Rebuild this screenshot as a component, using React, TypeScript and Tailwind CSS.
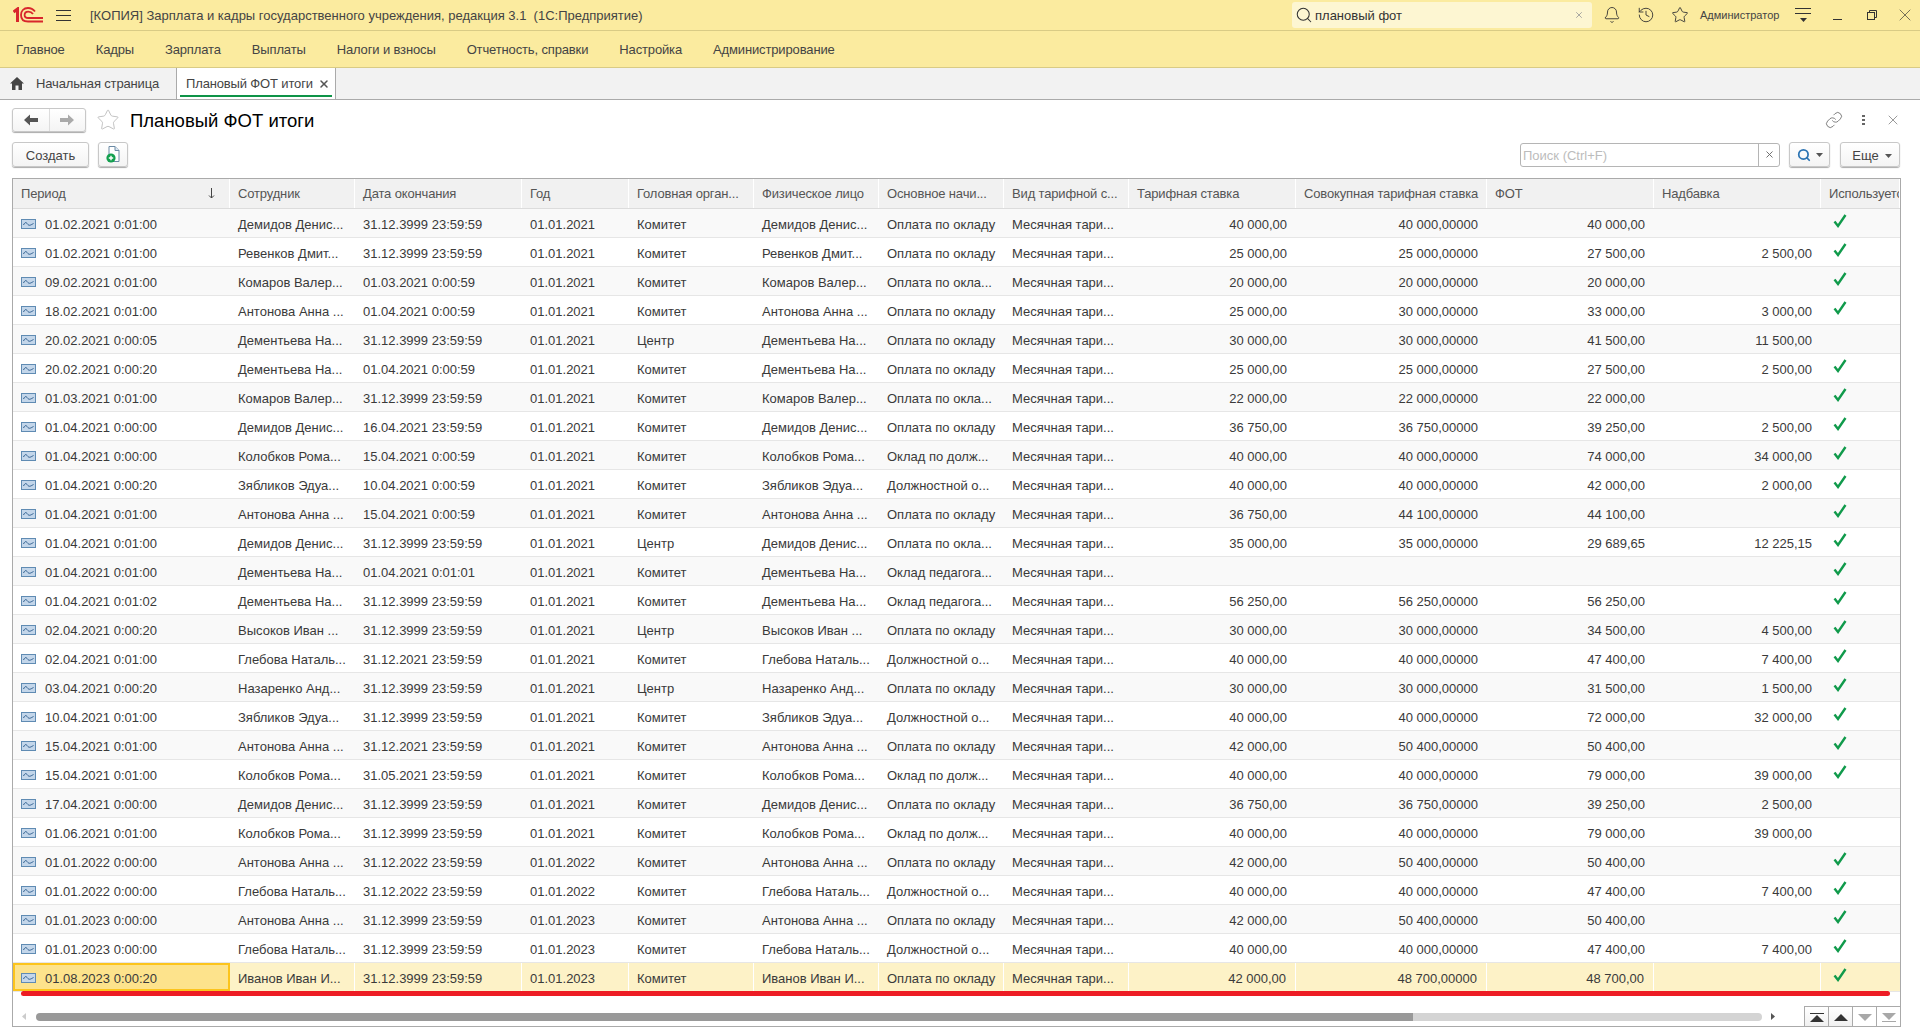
import React from "react";
import { Bell, History, Link, Search, Star, X } from "lucide-react";

const MENU = ["Главное", "Кадры", "Зарплата", "Выплаты", "Налоги и взносы", "Отчетность, справки", "Настройка", "Администрирование"];

// column widths follow the reference grid
const GRID = "grid grid-cols-[217px_125px_167px_107px_125px_125px_125px_125px_167px_191px_167px_167px_79px]";

const HEADERS = [
  "Период",
  "Сотрудник",
  "Дата окончания",
  "Год",
  "Головная орган...",
  "Физическое лицо",
  "Основное начи...",
  "Вид тарифной с...",
  "Тарифная ставка",
  "Совокупная тарифная ставка",
  "ФОТ",
  "Надбавка",
  "Используется",
];

const PAY = "Оплата по окладу";
const PAY2 = "Оплата по окла...";
const POST = "Оклад по долж...";
const DUTY = "Должностной о...";
const TEACH = "Оклад педагога...";
const END = "31.12.3999 23:59:59";

type Row = [string, string, string, string, string, string, string, string, string, string, boolean];

const ROWS: Row[] = [
  ["01.02.2021 0:01:00", "Демидов Денис...", END, "Комитет", PAY, "40 000,00", "40 000,00000", "40 000,00", "", "01.01.2021", true],
  ["01.02.2021 0:01:00", "Ревенков Дмит...", END, "Комитет", PAY, "25 000,00", "25 000,00000", "27 500,00", "2 500,00", "01.01.2021", true],
  ["09.02.2021 0:01:00", "Комаров Валер...", "01.03.2021 0:00:59", "Комитет", PAY2, "20 000,00", "20 000,00000", "20 000,00", "", "01.01.2021", true],
  ["18.02.2021 0:01:00", "Антонова Анна ...", "01.04.2021 0:00:59", "Комитет", PAY, "25 000,00", "30 000,00000", "33 000,00", "3 000,00", "01.01.2021", true],
  ["20.02.2021 0:00:05", "Дементьева На...", END, "Центр", PAY, "30 000,00", "30 000,00000", "41 500,00", "11 500,00", "01.01.2021", false],
  ["20.02.2021 0:00:20", "Дементьева На...", "01.04.2021 0:00:59", "Комитет", PAY, "25 000,00", "25 000,00000", "27 500,00", "2 500,00", "01.01.2021", true],
  ["01.03.2021 0:01:00", "Комаров Валер...", END, "Комитет", PAY2, "22 000,00", "22 000,00000", "22 000,00", "", "01.01.2021", true],
  ["01.04.2021 0:00:00", "Демидов Денис...", "16.04.2021 23:59:59", "Комитет", PAY, "36 750,00", "36 750,00000", "39 250,00", "2 500,00", "01.01.2021", true],
  ["01.04.2021 0:00:00", "Колобков Рома...", "15.04.2021 0:00:59", "Комитет", POST, "40 000,00", "40 000,00000", "74 000,00", "34 000,00", "01.01.2021", true],
  ["01.04.2021 0:00:20", "Зябликов Эдуа...", "10.04.2021 0:00:59", "Комитет", DUTY, "40 000,00", "40 000,00000", "42 000,00", "2 000,00", "01.01.2021", true],
  ["01.04.2021 0:01:00", "Антонова Анна ...", "15.04.2021 0:00:59", "Комитет", PAY, "36 750,00", "44 100,00000", "44 100,00", "", "01.01.2021", true],
  ["01.04.2021 0:01:00", "Демидов Денис...", END, "Центр", PAY2, "35 000,00", "35 000,00000", "29 689,65", "12 225,15", "01.01.2021", true],
  ["01.04.2021 0:01:00", "Дементьева На...", "01.04.2021 0:01:01", "Комитет", TEACH, "", "", "", "", "01.01.2021", true],
  ["01.04.2021 0:01:02", "Дементьева На...", END, "Комитет", TEACH, "56 250,00", "56 250,00000", "56 250,00", "", "01.01.2021", true],
  ["02.04.2021 0:00:20", "Высоков Иван ...", END, "Центр", PAY, "30 000,00", "30 000,00000", "34 500,00", "4 500,00", "01.01.2021", true],
  ["02.04.2021 0:01:00", "Глебова Наталь...", "31.12.2021 23:59:59", "Комитет", DUTY, "40 000,00", "40 000,00000", "47 400,00", "7 400,00", "01.01.2021", true],
  ["03.04.2021 0:00:20", "Назаренко Анд...", END, "Центр", PAY, "30 000,00", "30 000,00000", "31 500,00", "1 500,00", "01.01.2021", true],
  ["10.04.2021 0:01:00", "Зябликов Эдуа...", END, "Комитет", DUTY, "40 000,00", "40 000,00000", "72 000,00", "32 000,00", "01.01.2021", true],
  ["15.04.2021 0:01:00", "Антонова Анна ...", "31.12.2021 23:59:59", "Комитет", PAY, "42 000,00", "50 400,00000", "50 400,00", "", "01.01.2021", true],
  ["15.04.2021 0:01:00", "Колобков Рома...", "31.05.2021 23:59:59", "Комитет", POST, "40 000,00", "40 000,00000", "79 000,00", "39 000,00", "01.01.2021", true],
  ["17.04.2021 0:00:00", "Демидов Денис...", END, "Комитет", PAY, "36 750,00", "36 750,00000", "39 250,00", "2 500,00", "01.01.2021", false],
  ["01.06.2021 0:01:00", "Колобков Рома...", END, "Комитет", POST, "40 000,00", "40 000,00000", "79 000,00", "39 000,00", "01.01.2021", false],
  ["01.01.2022 0:00:00", "Антонова Анна ...", "31.12.2022 23:59:59", "Комитет", PAY, "42 000,00", "50 400,00000", "50 400,00", "", "01.01.2022", true],
  ["01.01.2022 0:00:00", "Глебова Наталь...", "31.12.2022 23:59:59", "Комитет", DUTY, "40 000,00", "40 000,00000", "47 400,00", "7 400,00", "01.01.2022", true],
  ["01.01.2023 0:00:00", "Антонова Анна ...", END, "Комитет", PAY, "42 000,00", "50 400,00000", "50 400,00", "", "01.01.2023", true],
  ["01.01.2023 0:00:00", "Глебова Наталь...", END, "Комитет", DUTY, "40 000,00", "40 000,00000", "47 400,00", "7 400,00", "01.01.2023", true],
  ["01.08.2023 0:00:20", "Иванов Иван И...", END, "Комитет", PAY, "42 000,00", "48 700,00000", "48 700,00", "", "01.01.2023", true],
];

function Logo() {
  return (
    <svg width="30" height="16" viewBox="0 0 30 16" fill="none" stroke="#d8262c" className="shrink-0">
      <path d="M0.5 5 L4.5 2 V15" strokeWidth="3" />
      <path d="M22 4.5 C20 2 17.5 1 15 1 C10.5 1 8 4 8 8 C8 12 10.5 14.5 15 14.5 H30" strokeWidth="1.8" />
      <path d="M20 7 C19 5.5 17 4.6 15.2 4.6 C13 4.6 11.6 6 11.6 8 C11.6 10 13 11 15.2 11 H30" strokeWidth="1.8" />
    </svg>
  );
}

function RowIcon() {
  return (
    <svg width="15" height="10" viewBox="0 0 15 10" className="mt-[1px] shrink-0">
      <rect x="0.5" y="0.5" width="14" height="9" fill="#c3d6ea" stroke="#5f8bb3" />
      <path d="M2.5 6 C4 3 5 3 6.5 5 C8 7 9 6.5 12.5 4.5" fill="none" stroke="#2f5f8f" />
    </svg>
  );
}

function Check() {
  return (
    <svg width="14" height="14" viewBox="0 0 14 14" className="-mt-[5px] shrink-0">
      <path d="M1.5 7.5 L5 12 L12.5 1" fill="none" stroke="#109a4b" strokeWidth="2.4" />
    </svg>
  );
}

function Caret({ color = "#555" }: { color?: string }) {
  return (
    <svg width="7" height="4" viewBox="0 0 7 4" className="shrink-0">
      <path d="M0 0 H7 L3.5 4 Z" fill={color} />
    </svg>
  );
}

function NavArrow({ color, flip }: { color: string; flip?: boolean }) {
  return (
    <svg width="14" height="12" viewBox="0 0 14 12" className={flip ? "rotate-180" : ""}>
      <path d="M0 6 L6 0.5 V4 H14 V8 H6 V11.5 Z" fill={color} />
    </svg>
  );
}

function PagerButton({ up, edge, on }: { up: boolean; edge: boolean; on: boolean }) {
  const c = on ? "#333" : "#a8a8a8";
  return (
    <div className={`flex h-full w-6 flex-col items-center justify-center gap-[1px] border-l border-[#aaa] ${on ? "bg-gradient-to-b from-white to-[#f0f0f0]" : "bg-white"}`}>
      {edge && up && <div className="h-[1px] w-[14px]" style={{ background: c }} />}
      <svg width="14" height="7" viewBox="0 0 14 7" className={up ? "" : "rotate-180"}>
        <path d="M0 7 L7 0 L14 7 Z" fill={c} />
      </svg>
      {edge && !up && <div className="h-[1px] w-[14px]" style={{ background: c }} />}
    </div>
  );
}

function TableRow({ row, index }: { row: Row; index: number }) {
  const [period, person, end, org, pay, rate, total, fot, extra, year, used] = row;
  const selected = index === ROWS.length - 1;
  const bg = selected ? "bg-[#fdf2c7]" : index % 2 === 0 ? "bg-[#f9f9f9]" : "bg-white";
  const cell = `flex items-center overflow-hidden whitespace-nowrap px-2 pt-[3px] ${selected ? "border-r border-white" : ""}`;
  const num = `flex items-center justify-end overflow-hidden whitespace-nowrap pr-[9px] pt-[3px] ${selected ? "border-r border-white" : ""}`;
  return (
    <div className={`${GRID} h-[29px] border-b border-[#e6e6e6] text-[13px] text-[#3a3a3a] ${bg}`}>
      <div className={`flex items-center gap-[9px] pl-2 ${selected ? "border-2 border-[#fcc41c] bg-[#fde38c] pl-[6px]" : ""}`}>
        <RowIcon />
        <span className="pt-[3px]">{period}</span>
      </div>
      <div className={cell}>{person}</div>
      <div className={cell}>{end}</div>
      <div className={cell}>{year}</div>
      <div className={cell}>{org}</div>
      <div className={cell}>{person}</div>
      <div className={cell}>{pay}</div>
      <div className={cell}>Месячная тари...</div>
      <div className={num}>{rate}</div>
      <div className={num}>{total}</div>
      <div className={num}>{fot}</div>
      <div className={num}>{extra}</div>
      <div className="flex items-center pl-3">{used && <Check />}</div>
    </div>
  );
}

export default function App() {
  return (
    <div className="flex h-[1035px] w-[1920px] flex-col overflow-hidden bg-white font-['Liberation_Sans',Arial,sans-serif] text-[13px] text-[#333]">
      {/* Title bar */}
      <header className="flex h-[31px] items-center border-b border-[#d9cb85] bg-[#fbeb9f]">
        <div className="ml-[13px] w-[43px]">
          <Logo />
        </div>
        <div className="flex w-[15px] flex-col gap-[4px]">
          <div className="h-[1px] bg-[#333]" />
          <div className="h-[1px] bg-[#333]" />
          <div className="h-[1px] bg-[#333]" />
        </div>
        <div className="ml-[19px] w-[1202px] whitespace-nowrap pt-[1px] text-[#444]">
          [КОПИЯ] Зарплата и кадры государственного учреждения, редакция 3.1&nbsp; (1С:Предприятие)
        </div>
        <div className="flex h-[26px] w-[300px] items-center rounded-[3px] bg-[#fdf6d2] pl-[3px] pr-[8px]">
          <Search size={18} strokeWidth={1.4} className="shrink-0 text-[#333]" />
          <span className="ml-[2px] flex-1 pt-[1px]">плановый фот</span>
          <X size={10} className="text-[#999]" />
        </div>
        <Bell size={18} strokeWidth={1.2} className="ml-[11px] shrink-0 text-[#333]" />
        <History size={18} strokeWidth={1.2} className="ml-[16px] shrink-0 text-[#333]" />
        <Star size={18} strokeWidth={1.2} className="ml-[16px] shrink-0 text-[#333]" />
        <span className="ml-[11px] w-[91px] whitespace-nowrap text-[11px] text-[#444]">Администратор</span>
        <div className="ml-[4px] flex w-[16px] flex-col items-center gap-[4px]">
          <div className="h-[1px] w-full bg-[#333]" />
          <div className="h-[1px] w-full bg-[#333]" />
          <Caret color="#333" />
        </div>
        <div className="ml-[22px] mt-[8px] h-[1px] w-[9px] bg-[#333]" />
        <svg width="10" height="10" viewBox="0 0 10 10" className="ml-[25px] shrink-0" fill="none" stroke="#333">
          <rect x="0.5" y="2.5" width="7" height="7" />
          <path d="M2.5 2.5 V0.5 H9.5 V7.5 H7.5" />
        </svg>
        <X size={20} strokeWidth={0.8} className="ml-[18px] shrink-0 text-[#333]" />
      </header>

      {/* Section menu */}
      <nav className="flex h-[37px] items-center gap-[31px] border-b border-[#d9cb85] bg-[#fbeb9f] pl-4 pt-[2px] tracking-[-0.14px] text-[#444]">
        {MENU.map((item) => (
          <span key={item}>{item}</span>
        ))}
      </nav>

      {/* Open windows */}
      <div className="flex h-[32px] border-b border-[#aaa] bg-[#f2f2f2] tracking-[-0.15px]">
        <div className="flex w-[176px] items-center pl-[10px] text-[#444]">
          <svg width="14" height="13" viewBox="0 0 14 13" className="mr-3">
            <path d="M0 6.5 L7 0 L14 6.5 H12 V13 H8.5 V8.5 H5.5 V13 H2 V6.5 Z" fill="#444" />
          </svg>
          Начальная страница
        </div>
        <div className="relative flex w-[160px] items-center border-x border-[#aaa] bg-white pl-[9px] text-[#444]">
          Плановый ФОТ итоги
          <X size={12} strokeWidth={3} className="ml-[5px] shrink-0 text-[#555]" />
          <div className="absolute bottom-[2px] left-[3px] right-[3px] h-[2px] bg-[#0e9347]" />
        </div>
      </div>

      {/* Form */}
      <main className="flex flex-col pl-3 pr-[19px] pt-2">
        <div className="flex h-6 items-center">
          <div className="flex h-6 w-[74px] rounded-[3px] border border-[#c8c8c8] bg-gradient-to-b from-white to-[#f4f4f4] shadow-[0_1px_1px_#aaa]">
            <div className="flex flex-1 items-center justify-center border-r border-[#ddd]">
              <NavArrow color="#555" />
            </div>
            <div className="flex flex-1 items-center justify-center">
              <NavArrow color="#aaa" flip />
            </div>
          </div>
          <Star size={24} strokeWidth={0.9} className="ml-[10px] text-[#bbb]" />
          <h1 className="ml-[10px] pt-[1px] text-[18.5px] text-black">Плановый ФОТ итоги</h1>
          <div className="flex-1" />
          <Link size={18} strokeWidth={1.1} className="text-[#666]" />
          <div className="ml-[19px] flex flex-col gap-[2px]">
            <div className="h-[2px] w-[3px] bg-[#666]" />
            <div className="h-[2px] w-[3px] bg-[#666]" />
            <div className="h-[2px] w-[3px] bg-[#666]" />
          </div>
          <X size={16} strokeWidth={1} className="ml-[20px] text-[#666]" />
        </div>

        <div className="mt-[10px] flex h-[25px] items-center">
          <button className="flex h-[25px] w-[77px] items-center justify-center rounded-[3px] border border-[#c8c8c8] bg-gradient-to-b from-white to-[#f4f4f4] pt-[2px] text-[#444] shadow-[0_1px_1px_#aaa]">
            Создать
          </button>
          <button className="ml-[9px] flex h-[25px] w-[30px] items-center justify-center rounded-[3px] border border-[#c8c8c8] bg-gradient-to-b from-white to-[#f4f4f4] shadow-[0_1px_1px_#aaa]">
            <svg width="14" height="17" viewBox="0 0 14 17">
              <path d="M3 0.5 H9 L13 4.5 V15.5 H3 Z" fill="#fff" stroke="#6b8aa5" />
              <path d="M9 0.5 V4.5 H13" fill="#dbe7f1" stroke="#6b8aa5" />
              <circle cx="5" cy="12" r="4.6" fill="#13a04f" />
              <path d="M2.8 12 H7.2 M5 9.8 V14.2" stroke="#fff" strokeWidth="1.4" />
            </svg>
          </button>
          <div className="flex-1" />
          <div className="flex h-[24px] w-[260px] overflow-hidden rounded-[3px] border border-[#b5b5b5] bg-white">
            <div className="flex flex-1 items-center pl-[2px] pt-[2px] text-[#bcbcbc]">Поиск (Ctrl+F)</div>
            <div className="flex w-[21px] items-center justify-center border-l border-[#b5b5b5]">
              <X size={11} strokeWidth={2} className="text-[#666]" />
            </div>
          </div>
          <button className="ml-[9px] flex h-[25px] w-[41px] items-center justify-center gap-[5px] rounded-[3px] border border-[#c8c8c8] bg-gradient-to-b from-white to-[#f4f4f4] shadow-[0_1px_1px_#aaa]">
            <Search size={14} strokeWidth={3} className="text-[#2c74b3]" />
            <Caret />
          </button>
          <button className="ml-[10px] mr-[1px] flex h-[25px] w-[60px] items-center justify-center gap-[6px] rounded-[3px] border border-[#c8c8c8] bg-gradient-to-b from-white to-[#f4f4f4] pl-[4px] pt-[2px] text-[#444] shadow-[0_1px_1px_#aaa]">
            Еще
            <Caret />
          </button>
        </div>

        {/* List */}
        <section className="mt-[11px] h-[849px] overflow-hidden border border-[#aaa]">
          <div className={`${GRID} h-[30px] border-b border-[#dcdcdc] bg-[#f1f1f1] tracking-[-0.15px] text-[#555]`}>
            {HEADERS.map((title, i) => (
              <div key={title} className={`flex items-center justify-between overflow-hidden whitespace-nowrap border-r border-white pl-2 ${i === 0 ? "pr-[14px]" : "pr-0"}`}>
                {title}
                {i === 0 && (
                  <svg width="7" height="11" viewBox="0 0 7 11" fill="none" stroke="#444" className="shrink-0">
                    <path d="M3.5 0 V10 M1 7.5 L3.5 10 L6 7.5" />
                  </svg>
                )}
              </div>
            ))}
          </div>

          <div className="relative">
            {ROWS.map((row, i) => (
              <TableRow key={i} row={row} index={i} />
            ))}
            {/* red annotation under the last row */}
            <div className="absolute left-2 top-[782px] h-[5px] w-[1869px] rounded-full bg-[#ed1c24]" />
          </div>

          <div className="flex h-[35px] items-end">
            <div className="flex h-[21px] flex-1 items-center pl-[9px]">
              <svg width="4" height="7" viewBox="0 0 4 7" className="mr-[10px]">
                <path d="M4 0 V7 L0 3.5 Z" fill="#ccc" />
              </svg>
              <div className="h-2 w-[1377px] rounded-l-full bg-[#999]" />
              <div className="h-2 w-[349px] rounded-r-full bg-[#d4d4d4]" />
              <svg width="4" height="7" viewBox="0 0 4 7" className="ml-[9px]">
                <path d="M0 0 V7 L4 3.5 Z" fill="#555" />
              </svg>
            </div>
            <div className="flex h-[21px] w-[96px] border-t border-[#aaa]">
              <PagerButton up edge on />
              <PagerButton up edge={false} on />
              <PagerButton up={false} edge={false} on={false} />
              <PagerButton up={false} edge on={false} />
            </div>
          </div>
        </section>
      </main>
    </div>
  );
}
